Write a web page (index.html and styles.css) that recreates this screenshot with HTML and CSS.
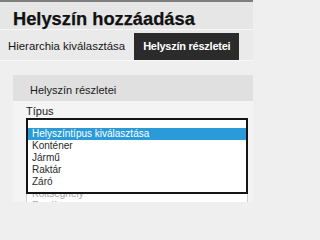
FILE: index.html
```html
<!DOCTYPE html>
<html lang="hu">
<head>
<meta charset="utf-8">
<title>Helyszín hozzáadása</title>
<link rel="stylesheet" href="styles.css">
</head>
<body>
<div class="page">
  <header class="topbar">
    <h1 class="title">Helyszín hozzáadása</h1>
  </header>
  <nav class="tabs">
    <div class="tab">Hierarchia kiválasztása</div>
    <div class="tab tab-active">Helyszín részletei</div>
  </nav>
  <main class="content">
    <section class="panel">
      <div class="panel-head">Helyszín részletei</div>
      <div class="panel-body">
        <label class="field-label">Típus</label>
        <div class="select-wrap">
          <ul class="listbox">
            <li>Helyszíntípus kiválasztása</li>
            <li>Konténer</li>
            <li>Jármű</li>
            <li>Raktár</li>
            <li>Záró</li>
            <li>Költséghely</li>
            <li>Egyéb</li>
          </ul>
          <ul class="dropdown">
            <li class="selected">Helyszíntípus kiválasztása</li>
            <li>Konténer</li>
            <li>Jármű</li>
            <li>Raktár</li>
            <li>Záró</li>
          </ul>
        </div>
      </div>
    </section>
  </main>
</div>
</body>
</html>
```
FILE: styles.css
```css
html, body {
  margin: 0;
  padding: 0;
  background: #efefef;
}
body {
  width: 253px;
  height: 202px;
  overflow: hidden;
  font-family: "Liberation Sans", Arial, sans-serif;
  color: #1a1a1a;
}
.page {
  width: 253px;
}
.topbar {
  border-top: 2px solid #7e7e7e;
  background: #e6e6e6;
  padding: 7px 0 0 13px;
  height: 20px;
}
.title {
  margin: 0;
  font-size: 18.3px;
  line-height: 20px;
  font-weight: bold;
  color: #111;
  white-space: nowrap;
  -webkit-text-stroke: 0.25px #111;
}
.tabs {
  display: flex;
  border-top: 1px solid #f7f7f7;
  border-bottom: 1px solid #f9f9f9;
  background: #eaeaea;
  padding-top: 3px;
}
.tab {
  height: 27px;
  line-height: 27px;
  padding: 0 9px 0 8px;
  font-size: 11.4px;
  white-space: nowrap;
  color: #141414;
}
.tab-active {
  background: #2b2b2b;
  color: #fff;
  font-weight: bold;
  font-size: 11px;
  letter-spacing: -0.25px;
  padding: 0 9px;
}
.content {
  padding: 14px 0 0 13px;
}
.panel {
  background: #f4f4f4;
  height: 140px;
}
.panel-head {
  background: #e0e0e0;
  padding: 9px 0 4px 17px;
  font-size: 11px;
  line-height: 13px;
  color: #1a1a1a;
}
.panel-body {
  padding: 4px 0 0 13px;
}
.field-label {
  display: block;
  font-size: 11px;
  line-height: 13px;
  color: #1a1a1a;
}
.select-wrap {
  position: relative;
  width: 222px;
}
.listbox {
  margin: 0;
  list-style: none;
  background: #fff;
  border: 1px solid #cfcfcf;
  padding: 9px 0 20px;
}
.listbox li {
  font-size: 10px;
  line-height: 12px;
  padding-left: 5px;
  color: #a8a8a8;
  white-space: nowrap;
}
.dropdown {
  position: absolute;
  top: 0;
  left: 0;
  width: 222px;
  box-sizing: border-box;
  margin: 0;
  list-style: none;
  background: #fff;
  border: 2px solid #141414;
  padding: 8px 0 4px;
}
.dropdown li {
  font-size: 10px;
  line-height: 12px;
  padding-left: 4px;
  color: #2a2a2a;
  white-space: nowrap;
}
.dropdown .selected {
  background: #2a9bd8;
  color: #fff;
}
```
